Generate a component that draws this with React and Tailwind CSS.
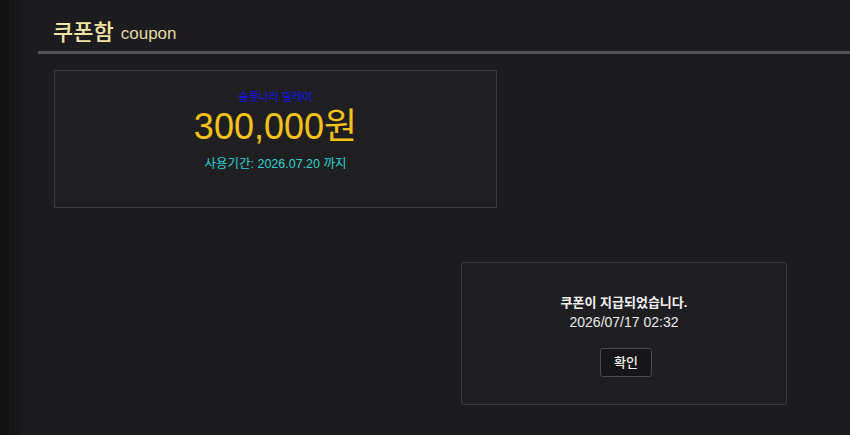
import React from "react";

const font = { fontFamily: '"Liberation Sans", "Noto Sans CJK KR", sans-serif' };

export default function App() {
  return (
    <div
      className="relative flex h-[435px] w-[850px] overflow-hidden bg-[#1c1c1e]"
      style={font}
    >
      {/* side rail */}
      <div className="flex h-full w-[22px] shrink-0">
        <div className="h-full w-[9px] bg-[#121212]" />
        <div className="h-full flex-1 bg-gradient-to-r from-[#151515] to-[#1a1a1a]" />
      </div>

      <main className="flex flex-1 flex-col">
        {/* heading */}
        <div className="flex items-end gap-[7px] pl-[31px] pt-[20px]">
          <span className="text-[22px] font-medium leading-[26px] text-[#f3e3a6]">쿠폰함</span>
          <span className="pb-[1px] text-[17px] leading-[22px] text-[#e6d9a8]">coupon</span>
        </div>
        <div className="ml-[16px] mt-[5px] h-[3px] bg-[#555557]" />

        {/* coupon card */}
        <div className="ml-[32px] mt-[16px] flex h-[138px] w-[443px] flex-col items-center border border-[#3a3a3c] bg-[#1f1f21] pt-[19px]">
          <span className="text-[11px] leading-[14px] text-[#1414f5]">슬롯나라 릴레이</span>
          <span className="mt-[3px] text-[36px] leading-[40px] text-[#f4c21a]">300,000원</span>
          <span className="mt-[9px] text-[12.5px] leading-[16px] text-[#2fd3cf]">
            사용기간: 2026.07.20 까지
          </span>
        </div>
      </main>

      {/* notice popup */}
      <div className="absolute left-[461px] top-[262px] flex h-[143px] w-[326px] flex-col items-center rounded-[3px] border border-[#38383a] bg-[#1e1e20] pt-[31px]">
        <span className="text-[13px] font-bold leading-[17px] text-[#f2f2f2]">
          쿠폰이 지급되었습니다.
        </span>
        <span className="mt-[2px] text-[14px] leading-[18px] text-[#ececec]">2026/07/17 02:32</span>
        <button className="ml-[4px] mt-[17px] h-[29px] w-[52px] rounded-[3px] border border-[#4a4a4c] bg-[#161618] text-[13px] font-medium text-[#f0f0f0]">
          확인
        </button>
      </div>
    </div>
  );
}
